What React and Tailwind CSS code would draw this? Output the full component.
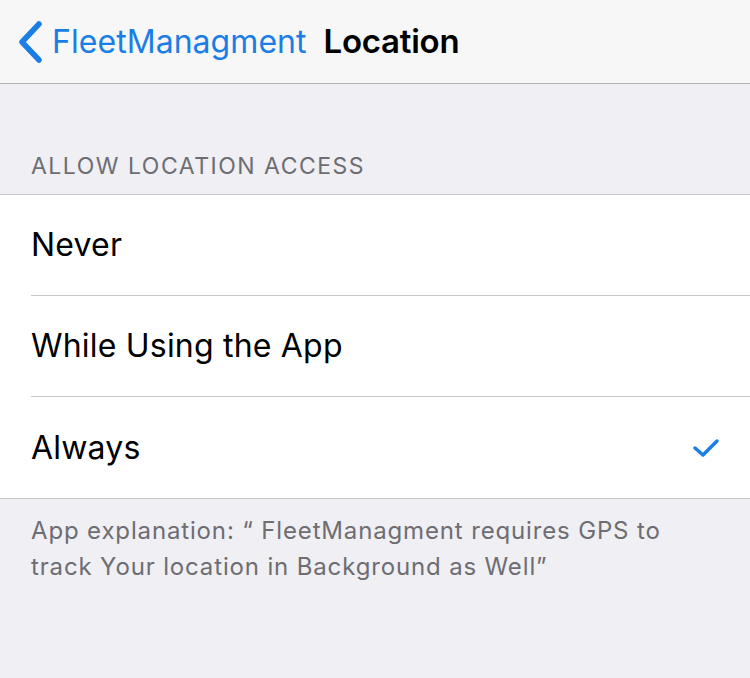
const options = [
  { label: "Never", checked: false },
  { label: "While Using the App", checked: false },
  { label: "Always", checked: true },
];

export default function App() {
  return (
    <div
      className="h-[678px] w-[750px] overflow-hidden bg-[#efeff4]"
      style={{ fontFamily: "Inter, 'Noto Sans', sans-serif" }}
    >
      <header className="flex h-[84px] items-center border-b border-[#b2b2b2] bg-[#f7f7f7] pl-[17px]">
        <svg width="26" height="42" viewBox="0 0 26 42" className="mr-[9px]">
          <path
            d="M22 3 L5 21 L22 39"
            fill="none"
            stroke="#1a7ee6"
            strokeWidth="5.5"
            strokeLinecap="round"
            strokeLinejoin="round"
          />
        </svg>
        <span className="text-[32px] tracking-[0.05px] text-[#1a7ee6]">FleetManagment</span>
        <span className="ml-[17px] text-[33px] font-semibold tracking-[-0.25px] text-black">Location</span>
      </header>

      <div className="px-[31px] pb-[14px] pt-[68px] text-[23px] leading-[28px] tracking-[1.5px] text-[#6d6d72]">
        ALLOW LOCATION ACCESS
      </div>

      <div className="border-y border-[#c8c7cc] bg-white">
        {options.map((item, index) => (
          <div key={item.label} className="pl-[31px]">
            <div
              className={
                "flex h-[101px] items-center justify-between pr-[30px] " +
                (index < options.length - 1 ? "border-b border-[#c8c7cc]" : "")
              }
            >
              <span className="text-[32px] tracking-[0.2px] text-black">{item.label}</span>
              {item.checked && (
                <svg width="28" height="22" viewBox="0 0 28 22">
                  <path
                    d="M3 11 L11 18 L25 4"
                    fill="none"
                    stroke="#1a7ee6"
                    strokeWidth="3.5"
                    strokeLinecap="round"
                    strokeLinejoin="round"
                  />
                </svg>
              )}
            </div>
          </div>
        ))}
      </div>

      <p className="px-[31px] pt-[14px] text-[24px] leading-[36px] tracking-[0.85px] text-[#6d6d72]">
        App explanation: “ FleetManagment requires GPS to track Your location in Background as Well”
      </p>
    </div>
  );
}
